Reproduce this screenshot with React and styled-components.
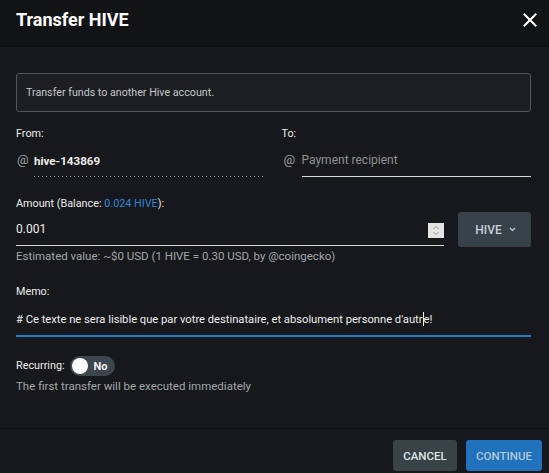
import styled, { createGlobalStyle } from "styled-components";

const GlobalStyle = createGlobalStyle`
	* { box-sizing: border-box; }
	body {
		margin: 0;
		background: #17181b;
		font-family: Roboto, "Liberation Sans", Arial, sans-serif;
	}
`;

// whole modal
const Modal = styled.div`
	width: 549px;
	height: 473px;
	display: flex;
	flex-direction: column;
	background: #17181b;
	color: #e6e7e8;
`;

// top bar
const Header = styled.div`
	height: 47px;
	flex: none;
	display: flex;
	justify-content: space-between;
	align-items: flex-start;
	padding: 9px 12px 0 16px;
	background: #121315;
	border-bottom: 1px solid #0f1012;
`;

const Title = styled.h1`
	margin: 0;
	font-size: 18px;
	line-height: 22px;
	font-weight: 700;
	color: #ffffff;
`;

const CloseBtn = styled.button`
	width: 14px;
	height: 14px;
	margin-top: 4px;
	padding: 0;
	border: none;
	background: none;
	display: flex;
	cursor: pointer;
`;

const Body = styled.div`
	flex: 1;
	padding: 26px 18px 0 16px;
`;

const InfoBox = styled.div`
	height: 39px;
	display: flex;
	align-items: center;
	padding: 0 9px;
	border: 1px solid #50565a;
	border-radius: 3px;
	background: #1c1e21;
	font-size: 10.7px;
	color: #c3c7ca;
`;

const TwoCols = styled.div`
	display: grid;
	grid-template-columns: 1fr 1fr;
	column-gap: 16px;
	margin-top: 15px;
`;

const Label = styled.div`
	font-size: 10.8px;
	line-height: ${(p) => p.$lh || 14}px;
	color: #eceded;
	margin-top: ${(p) => p.$top || 0}px;
	margin-bottom: ${(p) => p.$bottom ?? 6}px;
`;

const Blue = styled.span`
	color: #2e86d6;
`;

const InputRow = styled.div`
	display: flex;
	align-items: flex-end;
`;

const At = styled.span`
	width: ${(p) => p.$w || 18}px;
	flex: none;
	font-size: 13px;
	line-height: 26px;
	padding-bottom: 4px;
	padding-left: ${(p) => p.$pl || 1}px;
	color: #9aa0a4;
`;

const Input = styled.div`
	flex: 1;
	height: ${(p) => p.$height || 30}px;
	display: flex;
	align-items: center;
	padding-bottom: 3px;
	margin-right: ${(p) => p.$mr || 0}px;
	font-size: ${(p) => p.$size || 12}px;
	font-weight: ${(p) => (p.$bold ? 700 : 400)};
	color: ${(p) => (p.$placeholder ? "#8d9195" : "#eeeeee")};
	border-bottom: ${(p) => p.$line || "1px solid #d6d6d6"};
	background: ${(p) =>
		p.$dotted
			? "linear-gradient(to right, #a9a9a9 1px, transparent 1px) left bottom / 4px 1px repeat-x"
			: "none"};
	position: relative;
	white-space: nowrap;
`;

const AmountRow = styled.div`
	display: flex;
	align-items: flex-end;
	gap: 14px;
	margin-top: 20px;
`;

const AmountField = styled.div`
	flex: 1;
`;

const Spinner = styled.div`
	position: absolute;
	right: 0;
	top: 7px;
	width: 16px;
	height: 15px;
	background: #e4e4e4;
	display: flex;
	align-items: center;
	justify-content: center;
`;

const CurrencyBtn = styled.button`
	width: 73px;
	height: 35px;
	margin-bottom: -1px;
	border: none;
	border-radius: 3px;
	background: #36414a;
	color: #c9d1d8;
	font-family: inherit;
	font-size: 12px;
	font-weight: 500;
	display: flex;
	align-items: center;
	justify-content: center;
	gap: 7px;
	padding: 0 0 0 2px;
`;

const Hint = styled.div`
	font-size: 11.5px;
	line-height: 14px;
	color: #a2a6aa;
	margin-top: ${(p) => p.$top || 3}px;
`;

const Caret = styled.span`
	display: inline-block;
	width: 1px;
	height: 14px;
	background: #f2f2f2;
	vertical-align: -3px;
`;

const RecurringRow = styled.div`
	display: flex;
	align-items: center;
	gap: 5px;
	margin-top: 19px;
	height: 20px;
`;

const Toggle = styled.div`
	width: 45px;
	height: 20px;
	border-radius: 10px;
	background: #3c464d;
	display: flex;
	align-items: center;
	padding-left: 2px;
	gap: 6px;
`;

const Knob = styled.span`
	width: 16px;
	height: 16px;
	border-radius: 50%;
	background: #ffffff;
`;

const ToggleText = styled.span`
	font-size: 11px;
	font-weight: 700;
	color: #f0f0f0;
	padding-top: 1px;
`;

const Footer = styled.div`
	height: 45px;
	flex: none;
	border-top: 1px solid #0f1012;
	display: flex;
	justify-content: flex-end;
	align-items: flex-start;
	gap: 9px;
	padding: 11px 7px 0 0;
`;

const FootBtn = styled.button`
	height: 31px;
	width: ${(p) => p.$w}px;
	border: none;
	border-radius: 3px;
	background: ${(p) => (p.$primary ? "#1f72bb" : "#394347")};
	color: ${(p) => (p.$primary ? "#b4c8dd" : "#dfe3e6")};
	font-family: inherit;
	font-size: 11.5px;
	font-weight: 500;
	text-transform: uppercase;
	padding: 0;
`;

function App() {
	return (
		<>
			<GlobalStyle />
			<Modal>
				<Header>
					<Title>Transfer HIVE</Title>
					<CloseBtn aria-label="close">
						<svg width="14" height="14" viewBox="0 0 14 14">
							<path d="M1.5 1.5 L12.5 12.5 M12.5 1.5 L1.5 12.5" stroke="#ffffff" strokeWidth="2" strokeLinecap="square" />
						</svg>
					</CloseBtn>
				</Header>

				<Body>
					<InfoBox>Transfer funds to another Hive account.</InfoBox>

					<TwoCols>
						<div>
							<Label>From:</Label>
							<InputRow>
								<At>@</At>
								<Input $bold $size={11.6} $dotted $line="none" $mr={3}>hive-143869</Input>
							</InputRow>
						</div>
						<div>
							<Label>To:</Label>
							<InputRow>
								<At $w={20} $pl={2}>@</At>
								<Input $placeholder>Payment recipient</Input>
							</InputRow>
						</div>
					</TwoCols>

					<AmountRow>
						<AmountField>
							<Label $bottom={5}>
								Amount (Balance: <Blue>0.024 HIVE</Blue>):
							</Label>
							<Input>
								0.001
								<Spinner>
									<svg width="8" height="11" viewBox="0 0 8 11">
										<path d="M1.5 4 L4 1.5 L6.5 4 M1.5 7 L4 9.5 L6.5 7" stroke="#9a9a9a" strokeWidth="1" fill="none" />
									</svg>
								</Spinner>
							</Input>
						</AmountField>
						<CurrencyBtn>
							HIVE
							<svg width="7" height="5" viewBox="0 0 7 5">
								<path d="M1 1 L3.5 3.5 L6 1" stroke="#c9d1d8" strokeWidth="1.2" fill="none" />
							</svg>
						</CurrencyBtn>
					</AmountRow>
					<Hint>Estimated value: ~$0 USD (1 HIVE = 0.30 USD, by @coingecko)</Hint>

					<Label $top={22} $bottom={7}>Memo:</Label>
					<Input $height={31} $size={11.2} $line="2px solid #1a7fc8">
						<span>
							# Ce texte ne sera lisible que par votre destinataire, et absolument personne d'autr
							<Caret />
							e!
						</span>
					</Input>

					<RecurringRow>
						<Label $bottom={0} $lh={20}>Recurring:</Label>
						<Toggle>
							<Knob />
							<ToggleText>No</ToggleText>
						</Toggle>
					</RecurringRow>
					<Hint>The first transfer will be executed immediately</Hint>
				</Body>

				<Footer>
					<FootBtn $w={64}>Cancel</FootBtn>
					<FootBtn $w={76} $primary>Continue</FootBtn>
				</Footer>
			</Modal>
		</>
	);
}

export default App;
